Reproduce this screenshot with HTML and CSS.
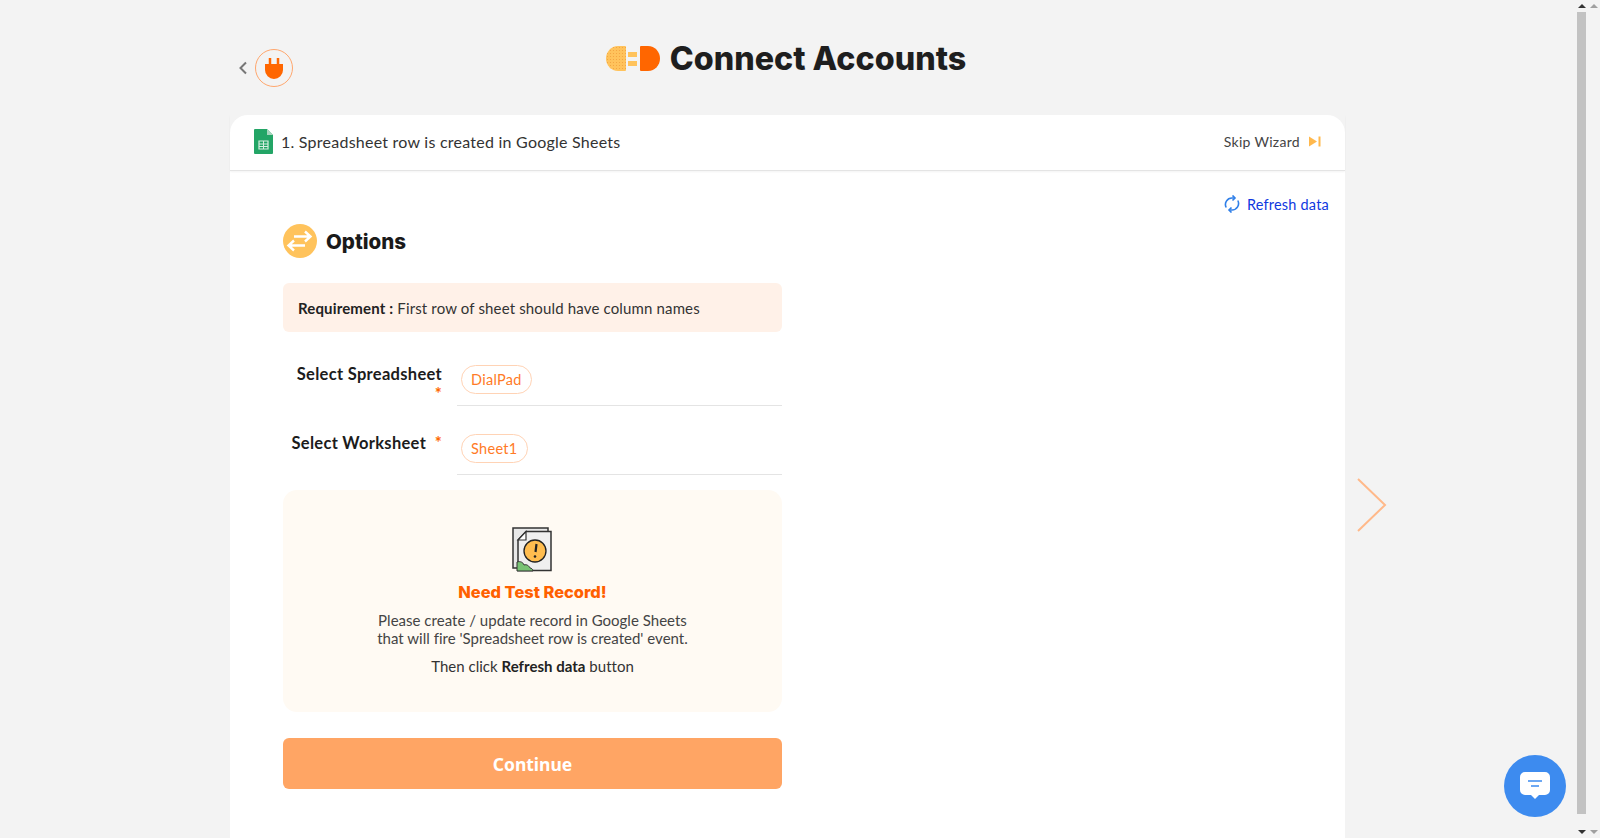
FILE: index.html
```html
<!DOCTYPE html>
<html lang="en">
<head>
<meta charset="utf-8">
<title>Connect Accounts</title>
<link rel="stylesheet" href="styles.css">
</head>
<body>
<div class="page">
  <header class="top">
    <div class="back">
      <svg class="chevron" width="10" height="14" viewBox="0 0 10 14"><path d="M8 1.500 2.500 7 8 12.500" fill="none" stroke="#777" stroke-width="2"/></svg>
      <span class="plug-ring">
        <svg width="18" height="22" viewBox="0 0 18 22"><path d="M3.750 1h2.500v7h-2.500zM11.750 1h2.500v7h-2.500zM0 7h18v6a9 9 0 0 1-18 0z" fill="#ff6600"/></svg>
      </span>
    </div>
    <div class="title">
      <svg class="logo" width="54" height="25" viewBox="0 0 54 25">
        <defs><pattern id="dots" width="3" height="3" patternUnits="userSpaceOnUse"><circle cx="1.500" cy="1.500" r=".6" fill="#f2a23e"/></pattern></defs>
        <path d="M19 0a1 1 0 0 1 1 1v23a1 1 0 0 1-1 1h-7C5 25 0 19 0 12.500S5 0 12 0z" fill="#ffc35c"/>
        <path d="M19 0a1 1 0 0 1 1 1v23a1 1 0 0 1-1 1h-7C5 25 0 19 0 12.500S5 0 12 0z" fill="url(#dots)"/>
        <path d="M22 6h9v5h-9zM22 15h9v5h-9z" fill="#ffc35c"/>
        <path d="M35 0h7c7 0 12 6 12 12.500S49 25 42 25h-7a1 1 0 0 1-1-1V1a1 1 0 0 1 1-1z" fill="#ff6600"/>
      </svg>
      <h1>Connect Accounts</h1>
    </div>
    <div></div>
  </header>

  <main class="card">
    <div class="card-head">
      <div class="step">
        <svg width="19" height="25" viewBox="0 0 19 25"><path d="M0 1a1 1 0 0 1 1-1h12l6 6v18a1 1 0 0 1-1 1H1a1 1 0 0 1-1-1z" fill="#23a566"/><path d="M13 0l6 6h-6z" fill="#a8d5bd"/><path d="M5 12h9v8H5z" fill="none" stroke="#d5eee0" stroke-width="1.200"/><path d="M5 15h9M5 17.500h9M9.500 12v8" stroke="#d5eee0" stroke-width="1"/></svg>
        <span>1. Spreadsheet row is created in Google Sheets</span>
      </div>
      <div class="skip">
        <span>Skip Wizard</span>
        <svg width="12" height="11" viewBox="0 0 12 11"><path d="M0 .5l8 5-8 5z" fill="#ffb84d"/><path d="M9.500 .5h2v10h-2z" fill="#ffb84d"/></svg>
      </div>
    </div>

    <div class="card-body">
      <div class="refresh">
        <svg width="16" height="18" viewBox="0 0 16 18" fill="none" stroke="#2f7fe8" stroke-width="1.600"><path d="M2.200 12.500A6.500 6.500 0 0 1 8 3h2"/><path d="M13.800 5.500A6.500 6.500 0 0 1 8 15H6"/><path d="M8.500.5 11 3 8.500 5.500M7.500 12.500 5 15l2.500 2.500"/></svg>
        <span>Refresh data</span>
      </div>

      <section class="panel">
        <div class="options">
          <span class="options-icon">
            <svg width="34" height="34" viewBox="0 0 34 34" fill="none" stroke="#fff" stroke-width="2.400"><path d="M11 12.500h16M22 7.500l5.500 5-5.500 5"/><path d="M22 21.500H6M11 16.500l-5.500 5 5.500 5"/></svg>
          </span>
          <h2>Options</h2>
        </div>

        <div class="requirement"><b>Requirement :</b> First row of sheet should have column names</div>

        <div class="field field-first">
          <label>Select Spreadsheet<br><em>*</em></label>
          <div class="control"><span class="chip">DialPad</span></div>
        </div>
        <div class="field">
          <label>Select Worksheet &nbsp;<em>*</em></label>
          <div class="control"><span class="chip">Sheet1</span></div>
        </div>

        <div class="notice">
          <svg class="doc" width="41" height="45" viewBox="0 0 41 45">
            <path d="M1 1h35v40H1z" fill="#e8e8e8" stroke="#333" stroke-width="1.500"/>
            <path d="M14 4.500h25v39H6V13z" fill="#efefef" stroke="#333" stroke-width="1.500"/>
            <path d="M6 13h8V4.500z" fill="#fff" stroke="#333" stroke-width="1.200"/>
            <circle cx="23" cy="24" r="11" fill="#ffbd4f" stroke="#222" stroke-width="1.300"/>
            <path d="M24.500 17l-1 8" stroke="#222" stroke-width="2.200"/><circle cx="23" cy="29.500" r="1.300" fill="#222"/>
            <path d="M5 44v-9c3-1 6 0 7 3 3-1 5 1 6 3 1 0 3 1 3 3z" fill="#78c274" stroke="#333" stroke-width="1"/>
          </svg>
          <h3>Need Test Record!</h3>
          <p>Please create / update record in Google Sheets<br>that will fire 'Spreadsheet row is created' event.</p>
          <p class="then">Then click <b>Refresh data</b> button</p>
        </div>

        <button class="continue" type="button">Continue</button>
      </section>
    </div>
  </main>
</div>

<svg class="next" width="30" height="54" viewBox="0 0 30 54"><path d="M1 1l27 26L1 53" fill="none" stroke="#ffb98a" stroke-width="2"/></svg>

<div class="chat">
  <svg width="32" height="30" viewBox="0 0 32 30"><path d="M6 1h20a5 5 0 0 1 5 5v13a5 5 0 0 1-5 5h-6l-4 4-4-4H6a5 5 0 0 1-5-5V6a5 5 0 0 1 5-5z" fill="#fff"/><path d="M9 10h14" stroke="#3d8bef" stroke-width="1.500"/><path d="M12 15h8" stroke="#3d8bef" stroke-width="1.500"/></svg>
</div>

<div class="scrollbars">
  <div class="bar bar-inner"><i class="up"></i><b class="thumb"></b><i class="down"></i></div>
  <div class="bar bar-outer"><i class="up"></i><i class="down"></i></div>
</div>
</body>
</html>
```
FILE: styles.css
```css
* { box-sizing: border-box; }
html, body { height: 100%; }
body {
  margin: 0;
  overflow: hidden;
  background: #f3f3f3;
  color: #222;
  font-family: Lato, "Noto Sans", sans-serif;
}
.page { width: 1115px; margin-left: 230px; }
.top {
  display: grid;
  grid-template-columns: 1fr auto 1fr;
  height: 115px;
}
.back { display: flex; align-items: center; gap: 7px; height: 38px; margin-top: 49px; padding-left: 8px; }
.plug-ring {
  width: 38px; height: 38px;
  display: flex; align-items: center; justify-content: center;
  border: 1px solid #ffa76e; border-radius: 50%;
}
.title { display: flex; align-items: center; gap: 10px; height: 26px; margin-top: 45px; padding-right: 3px; }
.title h1 { margin: 0; font: 800 32.250px Inter, sans-serif; color: #1e1e1e; white-space: nowrap; }
.card { background: #fff; border-radius: 18px 18px 0 0; height: 723px; }
.card-head {
  height: 56px;
  display: flex; align-items: center; justify-content: space-between;
  padding: 0 24px 2px;
  border-bottom: 1px solid #e4e4e4;
  box-shadow: 0 1px 2px rgba(0,0,0,.05);
}
.step { display: flex; align-items: center; gap: 8px; font-size: 16px; letter-spacing: .24px; color: #333; }
.skip { display: flex; align-items: center; gap: 9px; font-size: 14px; letter-spacing: .3px; color: #444; }
.card-body { position: relative; padding: 0 0 0 53px; }
.refresh {
  display: flex; justify-content: flex-end; align-items: center; gap: 7px;
  height: 18px; margin: 24px 16px 0 0;
  color: #0f38e0; font-size: 14.500px; letter-spacing: .2px;
}
.panel { width: 499px; margin-top: 11px; }
.options { display: flex; align-items: center; gap: 9px; }
.options-icon {
  width: 34px; height: 34px; border-radius: 50%;
  background: #ffc35c;
  display: flex; align-items: center; justify-content: center;
}
.options h2 { margin: 0; font: 800 20.500px Inter, sans-serif; color: #1a1a1a; }
.requirement {
  height: 49px; margin-top: 25px; padding-left: 15px;
  display: flex; align-items: center; white-space: pre;
  background: #fff1e8; border-radius: 6px;
  font-size: 15px; letter-spacing: .15px; color: #333;
}
.requirement b { color: #222; }
.field { display: grid; grid-template-columns: 159px 1fr; column-gap: 15px; height: 69px; }
.field-first { margin-top: 5px; }
.field label {
  padding-top: 27px;
  text-align: right; font-size: 16.500px; font-weight: 700; line-height: 20px; color: #1c1c1c; letter-spacing: .3px;
  white-space: nowrap;
}
.field em { color: #ff6600; font-style: normal; }
.control { border-bottom: 1px solid #e4e4e4; height: 69px; padding: 28px 0 0 4px; }
.chip {
  display: inline-block; height: 29px; line-height: 27px; padding: 0 9px;
  border: 1px solid #ffd3b5; border-radius: 15px;
  font-size: 14.500px; letter-spacing: .3px; color: #ff7a26;
}
.notice {
  margin-top: 15px; height: 222px; padding-top: 37px;
  text-align: center; background: #fffaf3; border-radius: 14px;
}
.doc { display: block; margin: 0 auto; }
.notice h3 { margin: 9px 0 0; font: 800 16.400px/22px Inter, sans-serif; color: #ff6000; }
.notice p { margin: 9px 0 0; font-size: 15px; line-height: 17.500px; color: #444; letter-spacing: .02px; }
.notice .then { margin-top: 11px; color: #333; }
.notice b { color: #222; }
.continue {
  display: block; width: 100%; height: 51px; margin-top: 26px;
  border: 0; border-radius: 6px; background: #ffa564; color: #fff;
  font: 700 17.500px "Noto Sans", sans-serif;
}
.next { position: fixed; left: 1357px; top: 478px; }
.chat {
  position: fixed; left: 1504px; top: 755px;
  width: 62px; height: 62px; border-radius: 50%; background: #3d8bef;
  display: flex; align-items: center; justify-content: center;
}
.scrollbars { position: fixed; top: 0; right: 0; bottom: 0; display: flex; }
.bar { position: relative; width: 12px; height: 100%; background: #f3f3f3; }
.thumb { position: absolute; left: 1px; right: 2px; top: 12px; bottom: 24px; background: #c2c2c2; }
.up, .down { position: absolute; left: 2px; width: 0; height: 0; border-left: 4px solid transparent; border-right: 4px solid transparent; }
.up { top: 4px; border-bottom: 4px solid #333; }
.down { bottom: 4px; border-top: 4px solid #333; }
.bar-outer .up { border-bottom-color: #a0a0a0; }
.bar-outer .down { border-top-color: #a0a0a0; }
```
